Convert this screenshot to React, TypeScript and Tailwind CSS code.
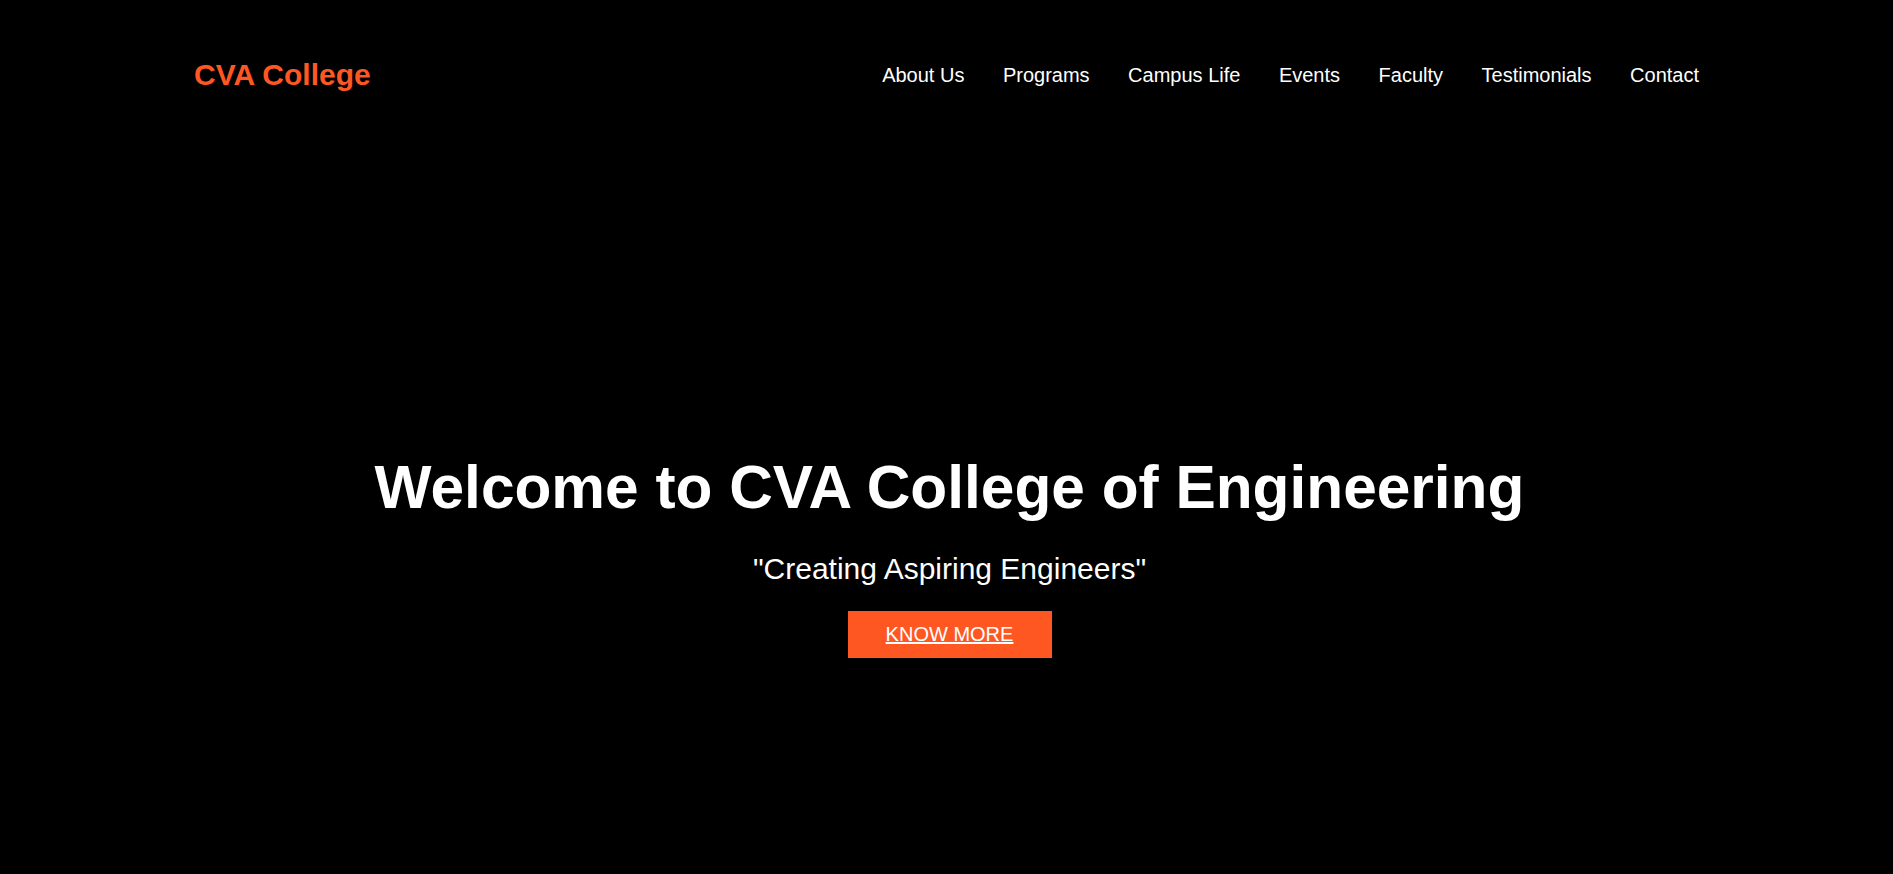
import React from "react";

const navLinks = ["About Us", "Programs", "Campus Life", "Events", "Faculty", "Testimonials", "Contact"];

const Header: React.FC = () => {
  return (
    <header className="h-[150px] px-[194px] flex items-center justify-between">
      <a href="#" className="text-[30px] font-bold text-[#ff5722] leading-[normal]">
        CVA College
      </a>
      <nav className="flex items-center gap-[38.5px]">
        {navLinks.map((link) => (
          <a key={link} href="#" className="text-[20px] text-white leading-[normal]">
            {link}
          </a>
        ))}
      </nav>
    </header>
  );
};

const Hero: React.FC = () => {
  return (
    <section className="pt-[302px] pl-[6px] flex flex-col items-center text-center text-white">
      <h1 className="text-[60.4px] font-bold leading-[normal]">Welcome to CVA College of Engineering</h1>
      <p className="mt-[30px] text-[30px] leading-[normal]">"Creating Aspiring Engineers"</p>
      <a
        href="#"
        className="mt-[25px] w-[204px] h-[47px] flex items-center justify-center bg-[#ff5722] text-[20px] text-white underline leading-[normal]"
      >
        KNOW MORE
      </a>
    </section>
  );
};

export default function App() {
  return (
    <div className="min-h-screen bg-black font-['Liberation_Sans',Arial,sans-serif]">
      <Header />
      <Hero />
    </div>
  );
}
